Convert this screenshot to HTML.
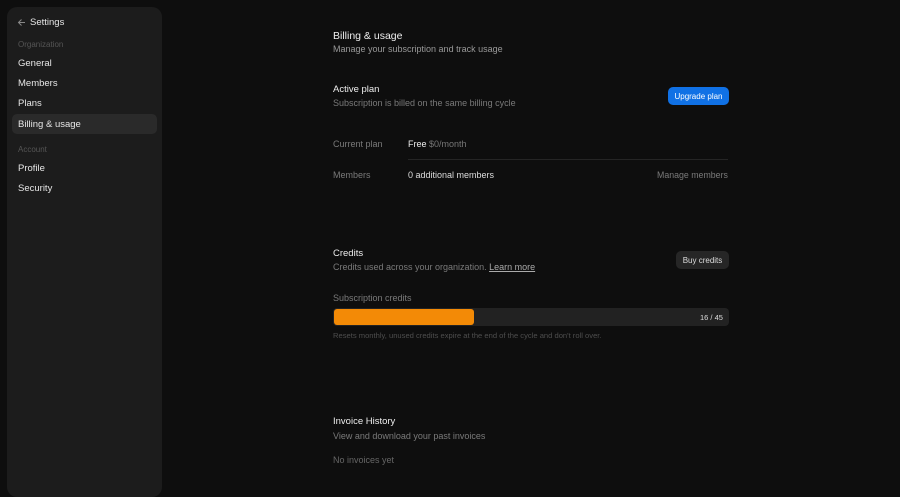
<!DOCTYPE html><html><head><style>
*{margin:0;padding:0;box-sizing:border-box}
body{width:900px;height:484px;background:#0e0e0e;font-family:"Liberation Sans",sans-serif;color:#e8e8e8;position:relative;overflow:hidden}
.a{position:absolute;white-space:nowrap}
.sb{position:absolute;left:7px;top:7px;width:155px;height:490px;background:#1c1c1c;border-radius:10px}
.it{font-size:9.5px;color:#e6e6e6}
.gr{font-size:8px;color:#555}
.s{font-size:9px;color:#7a7a7a}
.t{font-size:9.5px;color:#eee}
</style></head><body>
<div class="sb"></div>
<svg class="a" style="left:17px;top:18px" width="9" height="9" viewBox="0 0 9 9"><path d="M8 4.5H1.5M4.5 1.5L1.5 4.5L4.5 7.5" stroke="#888" fill="none" stroke-width="1"/></svg>
<div class="a it" style="left:30px;top:17px">Settings</div>
<div class="a gr" style="left:18px;top:40px">Organization</div>
<div class="a it" style="left:18px;top:58px">General</div>
<div class="a it" style="left:18px;top:78px">Members</div>
<div class="a it" style="left:18px;top:98px">Plans</div>
<div class="a" style="left:12px;top:114px;width:145px;height:20px;background:#2a2a2a;border-radius:5px"></div>
<div class="a it" style="left:18px;top:119px">Billing &amp; usage</div>
<div class="a gr" style="left:18px;top:145px">Account</div>
<div class="a it" style="left:18px;top:163px">Profile</div>
<div class="a it" style="left:18px;top:183px">Security</div>

<div class="a" style="left:333px;top:30px;font-size:10.5px;color:#eee">Billing &amp; usage</div>
<div class="a s" style="left:333px;top:44px;color:#999">Manage your subscription and track usage</div>
<div class="a t" style="left:333px;top:84px">Active plan</div>
<div class="a s" style="left:333px;top:98px">Subscription is billed on the same billing cycle</div>
<div class="a" style="left:668px;top:87px;width:61px;height:18px;background:#1071e5;border-radius:5px;font-size:8px;color:#fff;text-align:center;line-height:19px">Upgrade plan</div>
<div class="a s" style="left:333px;top:139px">Current plan</div>
<div class="a" style="left:408px;top:139px;font-size:9px;color:#eee">Free <span style="color:#777">$0/month</span></div>
<div class="a" style="left:408px;top:159px;width:320px;height:1px;background:#252525"></div>
<div class="a s" style="left:333px;top:170px">Members</div>
<div class="a" style="left:408px;top:170px;font-size:9px;color:#ddd">0 additional members</div>
<div class="a s" style="left:657px;top:170px;font-size:8.8px">Manage members</div>

<div class="a t" style="left:333px;top:248px">Credits</div>
<div class="a s" style="left:333px;top:262px">Credits used across your organization. <span style="color:#aaa;text-decoration:underline">Learn more</span></div>
<div class="a" style="left:676px;top:251px;width:53px;height:18px;background:#262626;border-radius:5px;font-size:8px;color:#ddd;text-align:center;line-height:19px">Buy credits</div>
<div class="a s" style="left:333px;top:293px">Subscription credits</div>
<div class="a" style="left:333px;top:308px;width:396px;height:18px;background:#222;border-radius:4px"></div>
<div class="a" style="left:334px;top:309px;width:140px;height:16px;background:#f38a06;border-radius:3px"></div>
<div class="a" style="left:700px;top:313px;font-size:7.5px;color:#ddd">16 / 45</div>
<div class="a" style="left:333px;top:331px;font-size:7.6px;color:#4e4e4e">Resets monthly, unused credits expire at the end of the cycle and don't roll over.</div>

<div class="a t" style="left:333px;top:416px">Invoice History</div>
<div class="a s" style="left:333px;top:431px">View and download your past invoices</div>
<div class="a s" style="left:333px;top:455px;color:#666">No invoices yet</div>
</body></html>
